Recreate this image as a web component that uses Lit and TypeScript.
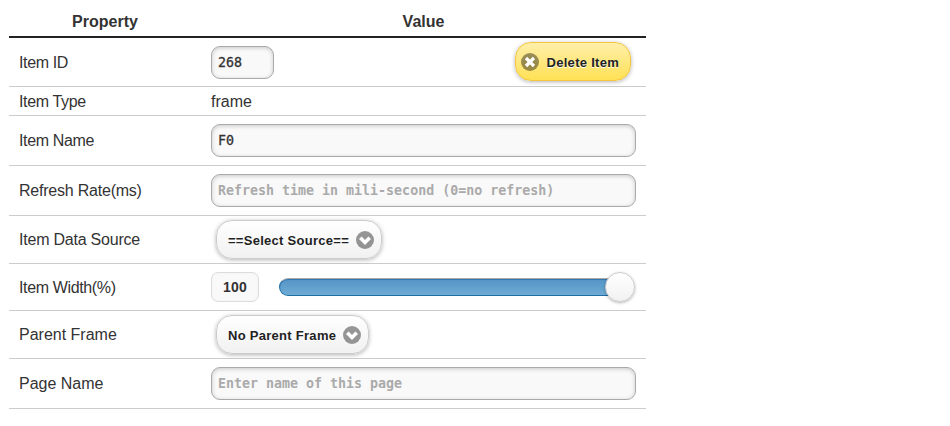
import { LitElement, html, css, svg } from "lit";
import { customElement, property } from "lit/decorators.js";

const cross = svg`<path d="M6.2 6.2 L11.8 11.8 M11.8 6.2 L6.2 11.8" fill="none" stroke="#fff" stroke-width="3.3" stroke-linecap="square"/>`;
const chevron = svg`<path d="M4.3 6.7 L9 11.4 L13.7 6.7" fill="none" stroke="#fff" stroke-width="3.6"/>`;

@customElement("pill-button")
class PillButton extends LitElement {
  @property() label = "";
  @property() icon = "arrow";
  @property({ reflect: true }) theme = "plain";

  static styles = css`
    :host { display: block; }
    button {
      box-sizing: border-box; width: 100%; height: 39px; margin: 0; padding: 0 7px 0 11px;
      display: flex; align-items: center; justify-content: space-between;
      border: 1px solid #ccc; border-radius: 16px;
      background: linear-gradient(#fff, #f1f1f1);
      box-shadow: 0 1px 4px rgba(0, 0, 0, 0.3);
      color: #222; font: bold 13px/17px "Liberation Sans", Arial, sans-serif;
      letter-spacing: 0.28px; white-space: nowrap; text-shadow: 0 1px 0 #fff;
    }
    span { padding-top: 1px; }
    svg { flex: none; width: 18px; height: 18px; display: block; }
    :host([theme="warn"]) button {
      flex-direction: row-reverse; padding: 0 11px 0 5px;
      border-color: #f4c63f; background: linear-gradient(#ffefaa, #ffe155);
    }
  `;

  render() {
    return html`<button type="button">
      <span>${this.label}</span>
      <svg viewBox="0 0 18 18">
        <circle cx="9" cy="9" r="9" fill="#000" fill-opacity="0.4"></circle>
        ${this.icon === "delete" ? cross : chevron}
      </svg>
    </button>`;
  }
}

@customElement("app-root")
class AppRoot extends LitElement {
  static styles = css`
    :host { display: block; box-sizing: border-box; height: 426px; padding: 6px 0 0 9px; background: #fff;
      color: #333; font: 16px/20px "Liberation Sans", Arial, sans-serif; }
    .table { width: 637px; }
    .row { display: grid; grid-template-columns: 192px 425px; align-items: center; padding: 0 10px;
      box-sizing: border-box; border-bottom: 1px solid #ccc; }
    .head { height: 32px; padding-top: 1px; border-bottom: 2px solid #222; font-weight: bold; text-align: center; }
    .head div:first-child { padding-right: 20px; }
    .tight { letter-spacing: -0.36px; }
    .snug { letter-spacing: -0.22px; }
    .low { padding-top: 2px; }
    .h29 { height: 29px; }
    .h47 { height: 47px; }
    .h48 { height: 48px; }
    .h49 { height: 49px; }
    .h50 { height: 50px; }
    .between { display: flex; align-items: center; justify-content: space-between; }
    .delete { width: 116px; margin: 0 5px 1px 0; }
    .source { width: 166px; margin-left: 5px; }
    .parent { width: 153px; margin-left: 5px; }
    input { box-sizing: border-box; display: block; width: 425px; height: 33px; margin: 0; padding: 0 6px;
      border: 1px solid #aaa; border-radius: 9px; background: #f9f9f9; color: #333; outline: none;
      box-shadow: inset 0 1px 4px rgba(0, 0, 0, 0.2);
      font: 13.3px "DejaVu Sans Mono", monospace; -webkit-text-stroke: 0.3px currentColor; }
    input::placeholder { color: #aaa; opacity: 1; font-weight: bold; -webkit-text-stroke: 0; }
    .id { width: 63px; }
    .number { width: 48px; height: 30px; border-color: #ddd; border-radius: 7px; padding: 0; text-align: center;
      box-shadow: inset 0 0 2px rgba(0, 0, 0, 0.06); -webkit-text-stroke: 0;
      font: bold 14px "Liberation Sans", Arial, sans-serif; letter-spacing: 0.2px; }
    .slider { display: flex; align-items: center; width: 356px; margin-right: 1px; }
    .track { box-sizing: border-box; flex: 1; height: 18px; margin-right: -15px;
      border: 1px solid #1f6fa5; border-top-color: #aaa; border-radius: 9px;
      background: linear-gradient(#5393c5, #6facd5); box-shadow: inset 0 1px 0 #3378ad; }
    .thumb { position: relative; box-sizing: border-box; width: 30px; height: 30px; flex: none; border: 1px solid #ccc;
      border-radius: 50%; background: linear-gradient(#fff, #f1f1f1); box-shadow: 0 1px 3px rgba(0, 0, 0, 0.3); }
  `;

  render() {
    return html`<div class="table">
      <div class="row head"><div>Property</div><div>Value</div></div>
      <div class="row h49">
        <div class="tight low">Item ID</div>
        <div class="between">
          <input class="id" .value=${"268"} />
          <pill-button class="delete" theme="warn" icon="delete" label="Delete Item"></pill-button>
        </div>
      </div>
      <div class="row h29"><div class="tight low">Item Type</div><div class="low">frame</div></div>
      <div class="row h50"><div class="tight">Item Name</div><input .value=${"F0"} /></div>
      <div class="row h50"><div class="snug">Refresh Rate(ms)</div><input placeholder="Refresh time in mili-second (0=no refresh)" /></div>
      <div class="row h48"><div class="snug">Item Data Source</div><pill-button class="source" label="==Select Source=="></pill-button></div>
      <div class="row h47">
        <div class="tight low">Item Width(%)</div>
        <div class="between">
          <input class="number" .value=${"100"} />
          <div class="slider"><div class="track"></div><div class="thumb"></div></div>
        </div>
      </div>
      <div class="row h48"><div>Parent Frame</div><pill-button class="parent" label="No Parent Frame"></pill-button></div>
      <div class="row h50"><div>Page Name</div><input placeholder="Enter name of this page" /></div>
    </div>`;
  }
}
